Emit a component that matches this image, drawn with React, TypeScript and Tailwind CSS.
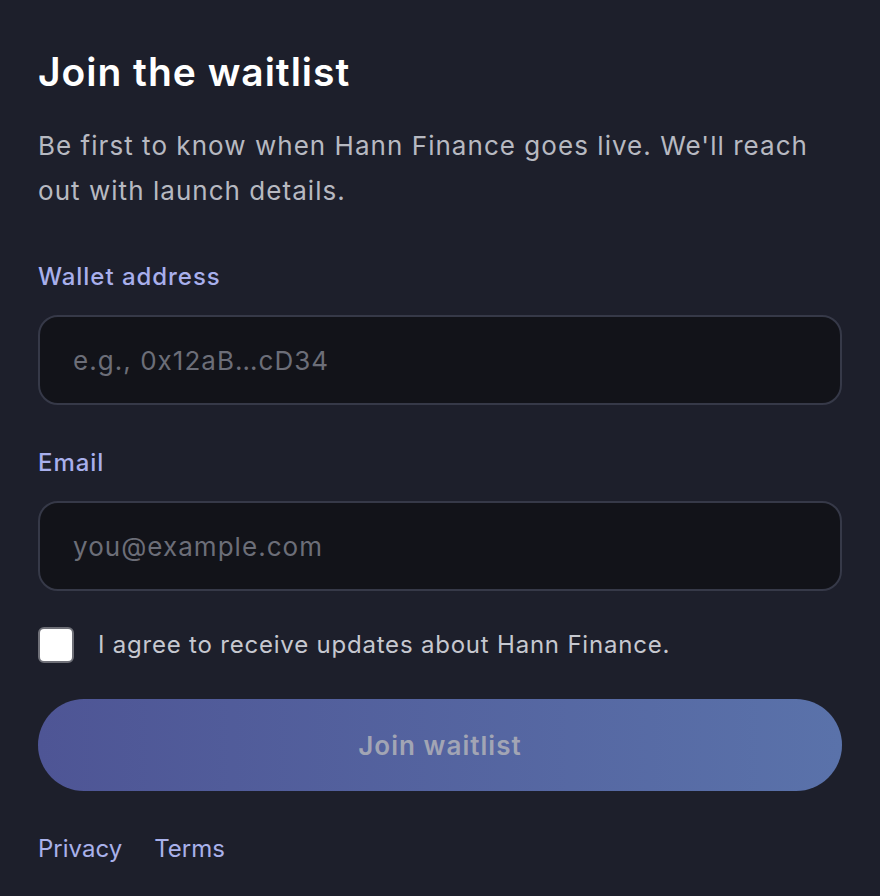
export default function App() {
    return (
        <div
            className="min-h-[896px] w-full bg-[#1d1f2b] text-white"
            style={{ fontFamily: "Inter, 'Noto Sans', sans-serif" }}
        >
            <div className="px-[38px] pt-[50px] flex flex-col">
                <h1 className="text-[39px] font-semibold leading-[44px] tracking-[0.025em] text-white">
                    Join the waitlist
                </h1>
                <p className="mt-[29px] text-[26px] leading-[45px] tracking-[0.04em] text-[#b7b9c1]">
                    Be first to know when Hann Finance goes live. We'll reach out with launch details.
                </p>

                <label className="mt-[48px] text-[24px] font-medium leading-[32px] tracking-[0.04em] text-[#a8afec]">
                    Wallet address
                </label>
                <input
                    className="mt-[22px] h-[90px] w-full rounded-[20px] border-2 border-[#363948] bg-[#121319] px-[33px] text-[26px] tracking-[0.04em] text-white placeholder:text-[#6c6e78] outline-none"
                    placeholder="e.g., 0x12aB…cD34"
                />

                <label className="mt-[42px] text-[24px] font-medium leading-[32px] tracking-[0.04em] text-[#a8afec]">
                    Email
                </label>
                <input
                    className="mt-[22px] h-[90px] w-full rounded-[20px] border-2 border-[#363948] bg-[#121319] px-[33px] text-[26px] tracking-[0.04em] text-white placeholder:text-[#6c6e78] outline-none"
                    placeholder="you@example.com"
                />

                <label className="mt-[36px] flex items-center gap-[24px]">
                    <span className="h-[36px] w-[36px] rounded-[6px] border-2 border-[#6f7078] bg-white" />
                    <span className="text-[24px] tracking-[0.033em] text-[#c6c8d0]">
                        I agree to receive updates about Hann Finance.
                    </span>
                </label>

                <button className="mt-[36px] h-[92px] w-full rounded-full bg-gradient-to-r from-[#4e5595] to-[#5a72aa] text-[26px] font-semibold tracking-[0.04em] text-[#a2a5b4]">
                    Join waitlist
                </button>

                <div className="mt-[40px] flex gap-[32px] text-[24px] text-[#a9b1ea]">
                    <span>Privacy</span>
                    <span>Terms</span>
                </div>
            </div>
        </div>
    );
}
